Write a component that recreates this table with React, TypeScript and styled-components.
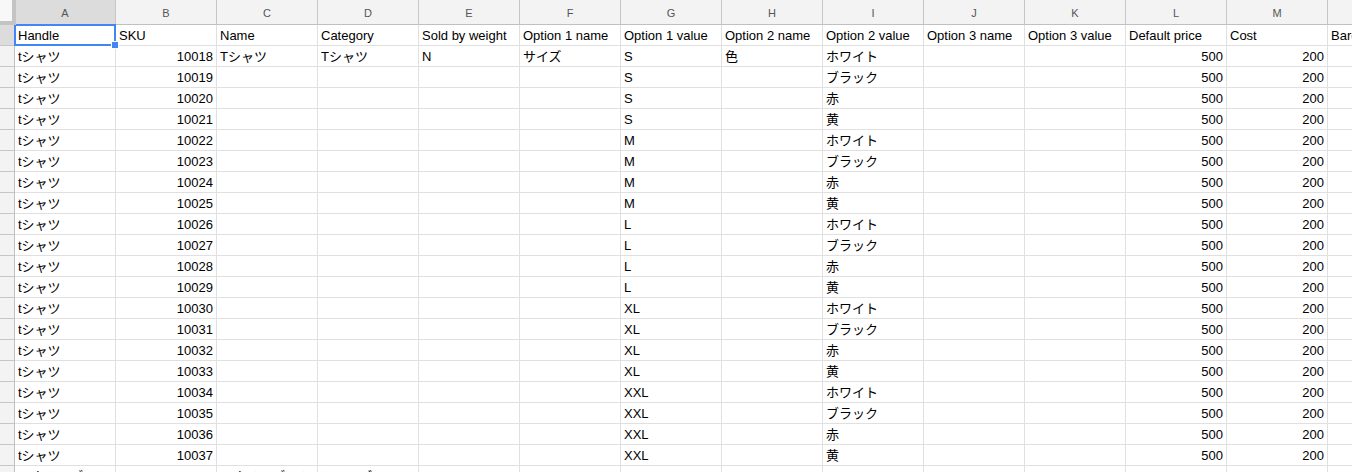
import React from "react"
import styled, { createGlobalStyle } from "styled-components"

const GlobalStyle = createGlobalStyle`
  html, body {
    margin: 0;
    padding: 0;
    background: #fff;
  }
  body {
    font-family: "Liberation Sans", Arial, "Noto Sans CJK JP", sans-serif;
    overflow: hidden;
  }
`

const letters = ["A", "B", "C", "D", "E", "F", "G", "H", "I", "J", "K", "L", "M", "N"]

const headers = [
  "Handle",
  "SKU",
  "Name",
  "Category",
  "Sold by weight",
  "Option 1 name",
  "Option 1 value",
  "Option 2 name",
  "Option 2 value",
  "Option 3 name",
  "Option 3 value",
  "Default price",
  "Cost",
  "Barcode",
]

// columns holding numbers are right aligned
const numeric = [1, 11, 12]

const sizes = ["S", "M", "L", "XL", "XXL"]
const colors = ["ホワイト", "ブラック", "赤", "黄"]

const buildRows = (): string[][] => {
  const rows: string[][] = []
  let sku = 10018
  sizes.forEach(size => {
    colors.forEach(color => {
      const first = sku === 10018
      rows.push([
        "tシャツ",
        String(sku),
        first ? "Tシャツ" : "",
        first ? "Tシャツ" : "",
        first ? "N" : "",
        first ? "サイズ" : "",
        size,
        first ? "色" : "",
        color,
        "",
        "",
        "500",
        "200",
        "",
      ])
      sku++
    })
  })
  rows.push([
    "エナメルブーツ",
    "10038",
    "エナメルブーツ",
    "シューズ",
    "",
    "",
    "",
    "",
    "",
    "",
    "",
    "1500",
    "1",
    "",
  ])
  return rows
}

const rows = buildRows()

export default function App() {
  return (
    <>
      <GlobalStyle />
      <Viewport>
        <Sheet>
          <Corner />
          {letters.map((l, i) => (
            <ColHead key={l} $active={i === 0}>
              {l}
            </ColHead>
          ))}

          <RowHead $active />
          {headers.map((h, i) => (
            <Cell key={h} $align="left">
              {h}
              {i === 0 && (
                <>
                  <Selection />
                  <FillHandle />
                </>
              )}
            </Cell>
          ))}

          {rows.map((row, r) => (
            <React.Fragment key={r}>
              <RowHead />
              {row.map((value, c) => (
                <Cell key={c} $align={numeric.includes(c) ? "right" : "left"}>
                  {value}
                </Cell>
              ))}
            </React.Fragment>
          ))}
        </Sheet>
      </Viewport>
    </>
  )
}

const Viewport = styled.div`
  width: 1352px;
  height: 472px;
  overflow: hidden;
`

const Sheet = styled.div`
  display: grid;
  grid-template-columns: 15px repeat(14, 101px);
  grid-auto-rows: 21px;
  grid-template-rows: 25px;
  width: max-content;
`

const Corner = styled.div`
  box-sizing: border-box;
  background: #f8f8f8;
  border-right: 4px solid #c4c4c4;
  border-bottom: 4px solid #c4c4c4;
  margin-right: -1px;
  position: relative;
  z-index: 1;
`

const ColHead = styled.div<{ $active?: boolean }>`
  box-sizing: border-box;
  display: flex;
  align-items: center;
  justify-content: center;
  background: ${p => (p.$active ? "#dcdcdc" : "#f3f3f3")};
  border-right: 1px solid #c6c6c6;
  border-bottom: 1px solid #c0c0c0;
  color: #555;
  font-size: 11px;
  padding-top: 1px;
`

const RowHead = styled.div<{ $active?: boolean }>`
  box-sizing: border-box;
  background: ${p => (p.$active ? "#dcdcdc" : "#f3f3f3")};
  border-right: 1px solid #c0c0c0;
  border-bottom: 1px solid #c6c6c6;
`

const Cell = styled.div<{ $align: "left" | "right" }>`
  box-sizing: border-box;
  position: relative;
  display: flex;
  align-items: flex-end;
  justify-content: ${p => (p.$align === "right" ? "flex-end" : "flex-start")};
  padding: 0 3px 1px 3px;
  border-right: 1px solid #e0e0e0;
  border-bottom: 1px solid #e0e0e0;
  font-family: "Liberation Sans", Arial, "Noto Sans CJK JP", sans-serif;
  font-size: 13px;
  line-height: 16px;
  color: #000;
  white-space: nowrap;
  overflow: visible;
`

const Selection = styled.div`
  position: absolute;
  left: -1px;
  top: -1px;
  right: -1px;
  bottom: -1px;
  border: 2px solid #4285f4;
  pointer-events: none;
`

const FillHandle = styled.div`
  position: absolute;
  right: -4px;
  bottom: -4px;
  width: 6px;
  height: 6px;
  background: #4285f4;
  border: 1px solid #fff;
  z-index: 2;
`
